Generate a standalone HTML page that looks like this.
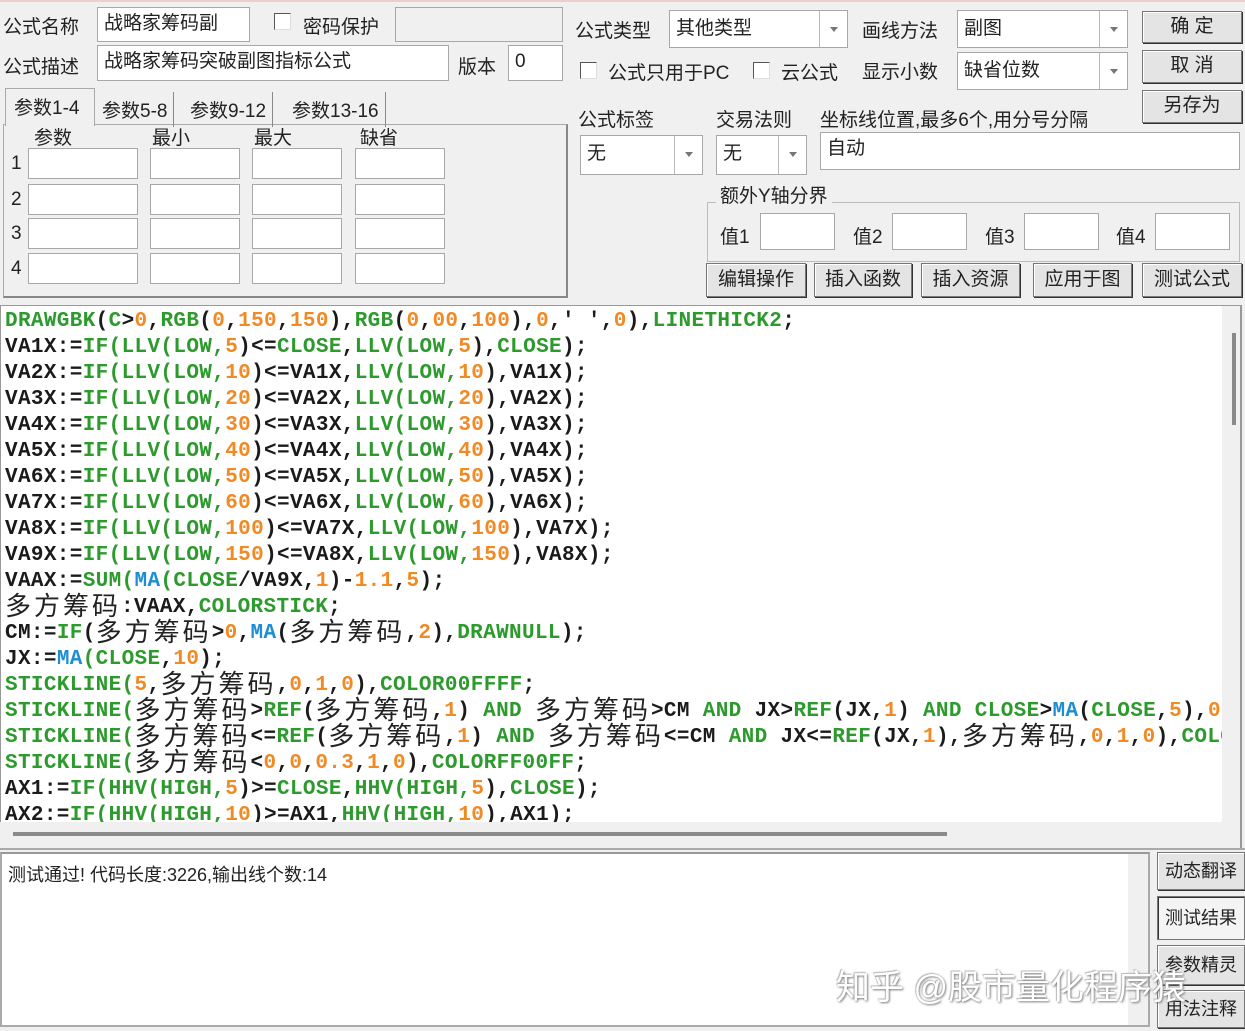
<!DOCTYPE html>
<html><head><meta charset="utf-8"><style>
*{box-sizing:border-box;margin:0;padding:0}
body{width:1245px;height:1031px;background:#f0f0f0;position:relative;overflow:hidden;font-family:"Liberation Sans","Noto Sans CJK SC",sans-serif;font-size:19px;color:#222}
.a{position:absolute;white-space:nowrap}
.in{position:absolute;background:#fff;border:1px solid #a8a8a8;padding:2px 6px;line-height:28px}
.cb{position:absolute;width:17px;height:17px;background:#fff;border:1px solid #555;border-right-color:#ddd;border-bottom-color:#ddd}
.btn{position:absolute;background:#e4e4e4;border:1px solid #777;box-shadow:inset 1px 1px 0 #fff,1px 1px 0 #333;text-align:center;font-size:19px}
.combo{position:absolute;background:#fff;border:1px solid #a8a8a8;padding:3px 6px;line-height:30px}
.combo .dd{position:absolute;right:0;top:0;bottom:0;width:28px;border-left:1px solid #b8b8b8}
.combo .dd:after{content:"";position:absolute;left:10px;top:16px;border:4px solid transparent;border-top:5px solid #777}
#code{position:absolute;left:0;top:305px;width:1222px;height:517px;background:#fff;overflow:hidden;font-family:"Liberation Mono",monospace;font-weight:bold;font-size:21px;line-height:26px;letter-spacing:0.35px;color:#1a1a1a;padding:3px 0 0 4px;border-top:1px solid #999;border-left:1px solid #999}
#code div{height:26px;line-height:26px;overflow:visible;white-space:pre}
.g{color:#2c9a2c}.o{color:#f08a24}.b{color:#1e8ed4}
.c{display:inline-block;height:26px;line-height:26px;vertical-align:top;position:relative;top:-3px;font-family:"Noto Sans CJK SC",sans-serif;font-weight:normal;font-size:26px;color:#222;letter-spacing:3px}
</style></head><body>
<div class="a" style="left:0;top:0;width:1245px;height:2px;background:#e8d0d0"></div>
<div class="a" style="left:3px;top:12px">公式名称</div>
<div class="in" style="left:97px;top:7px;width:153px;height:35px">战略家筹码副</div>
<div class="cb" style="left:274px;top:13px"></div>
<div class="a" style="left:303px;top:12px">密码保护</div>
<div class="in" style="left:395px;top:7px;width:168px;height:35px;background:#f0f0f0"></div>
<div class="a" style="left:3px;top:52px">公式描述</div>
<div class="in" style="left:97px;top:45px;width:352px;height:36px">战略家筹码突破副图指标公式</div>
<div class="a" style="left:458px;top:52px">版本</div>
<div class="in" style="left:508px;top:45px;width:55px;height:36px">0</div>
<div class="a" style="left:3px;top:124px;width:565px;height:174px;border:1px solid #aaa;border-right:2px solid #888;border-bottom:2px solid #888"></div>
<div class="a" style="left:5px;top:88px;width:90px;height:38px;border:1px solid #aaa;border-bottom:none;background:#f0f0f0;padding:4px 0 0 8px">参数1-4</div>
<div class="a" style="left:96px;top:92px;padding:4px 6px;border-right:1px solid #888">参数5-8</div>
<div class="a" style="left:184px;top:92px;padding:4px 6px;border-right:1px solid #888">参数9-12</div>
<div class="a" style="left:286px;top:92px;padding:4px 6px;border-right:1px solid #888">参数13-16</div>
<div class="a" style="left:34px;top:123px">参数</div>
<div class="a" style="left:152px;top:123px">最小</div>
<div class="a" style="left:254px;top:123px">最大</div>
<div class="a" style="left:360px;top:123px">缺省</div>
<div class="a" style="left:11px;top:153px">1</div><div class="a" style="left:11px;top:189px">2</div><div class="a" style="left:11px;top:223px">3</div><div class="a" style="left:11px;top:258px">4</div>
<div class="in" style="left:28px;top:148px;width:110px;height:31px"></div><div class="in" style="left:150px;top:148px;width:90px;height:31px"></div><div class="in" style="left:252px;top:148px;width:90px;height:31px"></div><div class="in" style="left:355px;top:148px;width:90px;height:31px"></div>
<div class="in" style="left:28px;top:184px;width:110px;height:31px"></div><div class="in" style="left:150px;top:184px;width:90px;height:31px"></div><div class="in" style="left:252px;top:184px;width:90px;height:31px"></div><div class="in" style="left:355px;top:184px;width:90px;height:31px"></div>
<div class="in" style="left:28px;top:218px;width:110px;height:31px"></div><div class="in" style="left:150px;top:218px;width:90px;height:31px"></div><div class="in" style="left:252px;top:218px;width:90px;height:31px"></div><div class="in" style="left:355px;top:218px;width:90px;height:31px"></div>
<div class="in" style="left:28px;top:253px;width:110px;height:31px"></div><div class="in" style="left:150px;top:253px;width:90px;height:31px"></div><div class="in" style="left:252px;top:253px;width:90px;height:31px"></div><div class="in" style="left:355px;top:253px;width:90px;height:31px"></div>
<div class="a" style="left:575px;top:16px">公式类型</div>
<div class="combo" style="left:669px;top:10px;width:179px;height:38px">其他类型<div class="dd"></div></div>
<div class="a" style="left:862px;top:16px">画线方法</div>
<div class="combo" style="left:957px;top:10px;width:171px;height:38px">副图<div class="dd"></div></div>
<div class="btn" style="left:1142px;top:11px;width:100px;height:32px;line-height:30px">确 定</div>
<div class="cb" style="left:580px;top:62px"></div>
<div class="a" style="left:608px;top:58px">公式只用于PC</div>
<div class="cb" style="left:753px;top:62px"></div>
<div class="a" style="left:781px;top:58px">云公式</div>
<div class="a" style="left:862px;top:57px">显示小数</div>
<div class="combo" style="left:957px;top:52px;width:171px;height:38px">缺省位数<div class="dd"></div></div>
<div class="btn" style="left:1142px;top:50px;width:100px;height:33px;line-height:30px">取 消</div>
<div class="btn" style="left:1142px;top:90px;width:100px;height:33px;line-height:30px">另存为</div>
<div class="a" style="left:578px;top:105px">公式标签</div>
<div class="a" style="left:716px;top:105px">交易法则</div>
<div class="a" style="left:820px;top:105px">坐标线位置,最多6个,用分号分隔</div>
<div class="combo" style="left:580px;top:135px;width:123px;height:40px">无<div class="dd"></div></div>
<div class="combo" style="left:716px;top:135px;width:91px;height:40px">无<div class="dd"></div></div>
<div class="in" style="left:820px;top:132px;width:420px;height:38px">自动</div>
<div class="a" style="left:707px;top:202px;width:533px;height:60px;border:1px solid #bbb"></div>
<div class="a" style="left:716px;top:181px;background:#f0f0f0;padding:0 4px">额外Y轴分界</div>
<div class="a" style="left:720px;top:222px">值1</div><div class="in" style="left:760px;top:213px;width:75px;height:37px"></div>
<div class="a" style="left:853px;top:222px">值2</div><div class="in" style="left:892px;top:213px;width:75px;height:37px"></div>
<div class="a" style="left:985px;top:222px">值3</div><div class="in" style="left:1024px;top:213px;width:75px;height:37px"></div>
<div class="a" style="left:1116px;top:222px">值4</div><div class="in" style="left:1155px;top:213px;width:75px;height:37px"></div>
<div class="btn" style="left:706px;top:263px;width:100px;height:34px;line-height:32px">编辑操作</div>
<div class="btn" style="left:814px;top:263px;width:98px;height:34px;line-height:32px">插入函数</div>
<div class="btn" style="left:921px;top:263px;width:99px;height:34px;line-height:32px">插入资源</div>
<div class="btn" style="left:1033px;top:263px;width:99px;height:34px;line-height:32px">应用于图</div>
<div class="btn" style="left:1142px;top:263px;width:100px;height:34px;line-height:32px">测试公式</div>
<div id="code"><div><span class="g">DRAWGBK</span>(<span class="g">C</span>&gt;<span class="o">0</span>,<span class="g">RGB</span>(<span class="o">0</span>,<span class="o">150</span>,<span class="o">150</span>),<span class="g">RGB</span>(<span class="o">0</span>,<span class="o">00</span>,<span class="o">100</span>),<span class="o">0</span>,' ',<span class="o">0</span>),<span class="g">LINETHICK2</span>;</div><div>VA1X:=<span class="g">IF(LLV(LOW,</span><span class="o">5</span>)&lt;=<span class="g">CLOSE</span>,<span class="g">LLV(LOW,</span><span class="o">5</span>),<span class="g">CLOSE</span>);</div><div>VA2X:=<span class="g">IF(LLV(LOW,</span><span class="o">10</span>)&lt;=VA1X,<span class="g">LLV(LOW,</span><span class="o">10</span>),VA1X);</div><div>VA3X:=<span class="g">IF(LLV(LOW,</span><span class="o">20</span>)&lt;=VA2X,<span class="g">LLV(LOW,</span><span class="o">20</span>),VA2X);</div><div>VA4X:=<span class="g">IF(LLV(LOW,</span><span class="o">30</span>)&lt;=VA3X,<span class="g">LLV(LOW,</span><span class="o">30</span>),VA3X);</div><div>VA5X:=<span class="g">IF(LLV(LOW,</span><span class="o">40</span>)&lt;=VA4X,<span class="g">LLV(LOW,</span><span class="o">40</span>),VA4X);</div><div>VA6X:=<span class="g">IF(LLV(LOW,</span><span class="o">50</span>)&lt;=VA5X,<span class="g">LLV(LOW,</span><span class="o">50</span>),VA5X);</div><div>VA7X:=<span class="g">IF(LLV(LOW,</span><span class="o">60</span>)&lt;=VA6X,<span class="g">LLV(LOW,</span><span class="o">60</span>),VA6X);</div><div>VA8X:=<span class="g">IF(LLV(LOW,</span><span class="o">100</span>)&lt;=VA7X,<span class="g">LLV(LOW,</span><span class="o">100</span>),VA7X);</div><div>VA9X:=<span class="g">IF(LLV(LOW,</span><span class="o">150</span>)&lt;=VA8X,<span class="g">LLV(LOW,</span><span class="o">150</span>),VA8X);</div><div>VAAX:=<span class="g">SUM(</span><span class="b">MA</span><span class="g">(CLOSE</span>/VA9X,<span class="o">1</span>)-<span class="o">1.1</span>,<span class="o">5</span>);</div><div><span class="c">多方筹码</span>:VAAX,<span class="g">COLORSTICK</span>;</div><div>CM:=<span class="g">IF</span>(<span class="c">多方筹码</span>&gt;<span class="o">0</span>,<span class="b">MA</span>(<span class="c">多方筹码</span>,<span class="o">2</span>),<span class="g">DRAWNULL</span>);</div><div>JX:=<span class="b">MA</span><span class="g">(CLOSE</span>,<span class="o">10</span>);</div><div><span class="g">STICKLINE(</span><span class="o">5</span>,<span class="c">多方筹码</span>,<span class="o">0</span>,<span class="o">1</span>,<span class="o">0</span>),<span class="g">COLOR00FFFF</span>;</div><div><span class="g">STICKLINE(</span><span class="c">多方筹码</span>&gt;<span class="g">REF</span>(<span class="c">多方筹码</span>,<span class="o">1</span>) <span class="g">AND</span> <span class="c">多方筹码</span>&gt;CM <span class="g">AND</span> JX&gt;<span class="g">REF</span>(JX,<span class="o">1</span>) <span class="g">AND</span> <span class="g">CLOSE</span>&gt;<span class="b">MA</span>(<span class="g">CLOSE</span>,<span class="o">5</span>),<span class="o">0</span>,<span class="c">多方筹码</span></div><div><span class="g">STICKLINE(</span><span class="c">多方筹码</span>&lt;=<span class="g">REF</span>(<span class="c">多方筹码</span>,<span class="o">1</span>) <span class="g">AND</span> <span class="c">多方筹码</span>&lt;=CM <span class="g">AND</span> JX&lt;=<span class="g">REF</span>(JX,<span class="o">1</span>),<span class="c">多方筹码</span>,<span class="o">0</span>,<span class="o">1</span>,<span class="o">0</span>),<span class="g">COLOR00FFFF</span>;</div><div><span class="g">STICKLINE(</span><span class="c">多方筹码</span>&lt;<span class="o">0</span>,<span class="o">0</span>,<span class="o">0.3</span>,<span class="o">1</span>,<span class="o">0</span>),<span class="g">COLORFF00FF</span>;</div><div>AX1:=<span class="g">IF(HHV(HIGH,</span><span class="o">5</span>)&gt;=<span class="g">CLOSE</span>,<span class="g">HHV(HIGH,</span><span class="o">5</span>),<span class="g">CLOSE</span>);</div><div>AX2:=<span class="g">IF(HHV(HIGH,</span><span class="o">10</span>)&gt;=AX1,<span class="g">HHV(HIGH,</span><span class="o">10</span>),AX1);</div></div>
<div class="a" style="left:1222px;top:305px;width:18px;height:517px;background:#f0f0f0;border-top:1px solid #999"></div>
<div class="a" style="left:1232px;top:333px;width:4px;height:92px;background:#8a8a8a"></div>
<div class="a" style="left:1240px;top:305px;width:2px;height:545px;background:#999"></div>
<div class="a" style="left:13px;top:832px;width:934px;height:4px;background:#8a8a8a"></div>
<div class="a" style="left:0;top:848px;width:1245px;height:2px;background:#aaa"></div>
<div class="a" style="left:0;top:852px;width:1150px;height:175px;background:#fff;border:2px solid #aaa;border-top-color:#999"></div>
<div class="a" style="left:1128px;top:854px;width:20px;height:171px;background:#f0f0f0"></div>
<div class="a" style="left:8px;top:861px;font-size:18px">测试通过! 代码长度:3226,输出线个数:14</div>
<div class="btn" style="left:1157px;top:852px;width:88px;height:38px;line-height:36px;font-size:18px">动态翻译</div>
<div class="btn" style="left:1157px;top:896px;width:88px;height:44px;line-height:42px;font-size:18px;background:#f4f4f4;box-shadow:inset 1px 1px 0 #333">测试结果</div>
<div class="btn" style="left:1157px;top:945px;width:88px;height:40px;line-height:38px;font-size:18px">参数精灵</div>
<div class="btn" style="left:1157px;top:990px;width:88px;height:38px;line-height:36px;font-size:18px">用法注释</div>
<div class="a" style="left:836px;top:960px;font-size:34px;color:#fff;text-shadow:1px 1px 2px #777,-1px -1px 1px #bbb">知乎 @股市量化程序猿</div>
</body></html>
